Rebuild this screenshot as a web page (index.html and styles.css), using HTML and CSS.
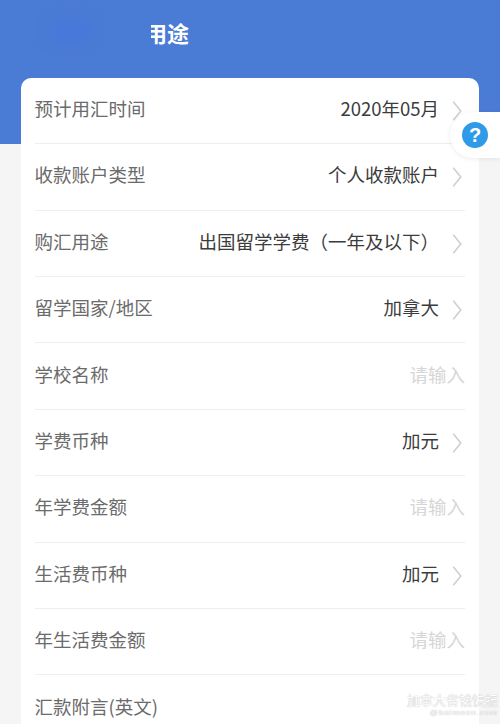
FILE: index.html
```html
<!DOCTYPE html>
<html lang="zh-CN">
<head>
<meta charset="utf-8">
<title>购汇用途</title>
<link rel="stylesheet" href="styles.css">
</head>
<body>
<div class="page">
  <header class="header">
    <h1 class="title">购汇用途</h1>
    <div class="blur-patch"></div>
  </header>
  <main class="card">
    <div class="row"><span class="label">预计用汇时间</span><span class="value">2020年05月</span><svg class="chev" viewBox="0 0 12 26"><path d="M1.5 2 L10.5 13 L1.5 24"/></svg></div>
    <div class="row"><span class="label">收款账户类型</span><span class="value">个人收款账户</span><svg class="chev" viewBox="0 0 12 26"><path d="M1.5 2 L10.5 13 L1.5 24"/></svg></div>
    <div class="row"><span class="label">购汇用途</span><span class="value">出国留学学费（一年及以下）</span><svg class="chev" viewBox="0 0 12 26"><path d="M1.5 2 L10.5 13 L1.5 24"/></svg></div>
    <div class="row"><span class="label">留学国家/地区</span><span class="value">加拿大</span><svg class="chev" viewBox="0 0 12 26"><path d="M1.5 2 L10.5 13 L1.5 24"/></svg></div>
    <div class="row"><span class="label">学校名称</span><span class="hint">请输入</span></div>
    <div class="row"><span class="label">学费币种</span><span class="value">加元</span><svg class="chev" viewBox="0 0 12 26"><path d="M1.5 2 L10.5 13 L1.5 24"/></svg></div>
    <div class="row"><span class="label">年学费金额</span><span class="hint">请输入</span></div>
    <div class="row"><span class="label">生活费币种</span><span class="value">加元</span><svg class="chev" viewBox="0 0 12 26"><path d="M1.5 2 L10.5 13 L1.5 24"/></svg></div>
    <div class="row"><span class="label">年生活费金额</span><span class="hint">请输入</span></div>
    <div class="row"><span class="label">汇款附言(英文)</span></div>
  </main>
  <aside class="help"><span class="help-dot">?</span></aside>
  <div class="mark"><div class="mark-main">加拿大省钱快报</div><div class="mark-sub">@baimoon.com</div></div>
</div>
</body>
</html>
```
FILE: styles.css
```css
* { box-sizing: border-box; }
html, body { margin: 0; padding: 0; }
body { font-family: "Noto Sans CJK SC", "Noto Sans", sans-serif; background: #f5f5f5; }
.page { position: relative; width: 500px; height: 724px; overflow: hidden; background: #f5f5f5; }
.header { height: 144px; background: #4a7bd5; padding: 17px 0 0 101px; overflow: hidden; position: relative; }
.title { margin: 0; font-size: 22px; line-height: 30px; font-weight: 700; color: #fff; }
.blur-patch { position: absolute; left: 0; top: 0; width: 151px; height: 70px; background: #4a7bd5; }
.blur-patch::after { content: ""; position: absolute; left: 50px; top: 22px; width: 40px; height: 18px; border-radius: 10px; background: #4677dc; filter: blur(7px); }
.card { position: relative; margin: -66px 21px 0; background: #fff; border-radius: 10px 10px 0 0; padding: 0 14px 0 13.5px; }
.row { display: flex; align-items: center; height: 66.4px; border-bottom: 1px solid #eee; font-size: 18.5px; line-height: 26px; position: relative; padding-bottom: 5px; }
.row:first-child { height: 66.2px; }
.row:last-child { border-bottom: 0; }
.label { color: #6b6b6b; flex: 1 1 auto; }
.value { color: #3c3c3c; margin-right: 26px; }
.hint { color: #d6d6d6; }
.chev { position: absolute; right: 3px; top: 22px; width: 10px; height: 22px; fill: none; stroke: #d0d0d0; stroke-width: 2; }
.help { position: absolute; right: 0; top: 112px; width: 50px; height: 46px; background: #fff; border-radius: 23px 0 0 23px; box-shadow: 0 1px 5px rgba(0,0,0,.08); display: flex; align-items: center; padding-left: 12px; }
.help-dot { width: 26px; height: 26px; border-radius: 50%; background: #2f9be8; color: #fff; font: 700 20px/26px "Liberation Sans", sans-serif; text-align: center; }
.mark { position: absolute; right: 2px; top: 692px; text-align: right; color: #fff; text-shadow: 0 0 1px #999; }
.mark-main { font-size: 13px; line-height: 16px; }
.mark-sub { font-family: "Liberation Sans", sans-serif; font-size: 8px; line-height: 10px; letter-spacing: 1px; }
```
